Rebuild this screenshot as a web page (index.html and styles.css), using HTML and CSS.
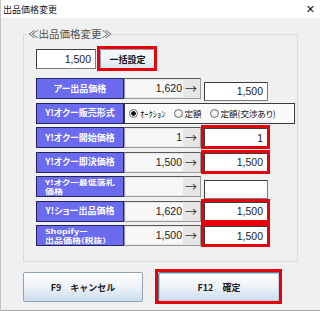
FILE: index.html
```html
<!DOCTYPE html>
<html lang="ja">
<head>
    <meta charset="UTF-8">
    <meta name="viewport" content="width=device-width, initial-scale=1.0">
    <title>出品価格変更</title>
    <link rel="stylesheet" href="styles.css">
</head>
<body>
    <div class="window">
        <div class="titlebar">
            <span class="title">出品価格変更</span>
            <span class="close">✕</span>
        </div>

        <div class="main">
            <fieldset class="group">
                <legend>≪出品価格変更≫</legend>

                <!-- bulk setting -->
                <div class="bulk">
                    <input type="text" class="num bulk-input" value="1,500">
                    <span class="mark"><button class="btn-small">一括設定</button></span>
                </div>

                <div class="rows">
                    <div class="row">
                        <div class="label"><span>アー出品価格</span></div>
                        <div class="cur"><span class="val">1,620</span><span class="arrow">→</span></div>
                        <span class="new"><input type="text" class="num" value="1,500"></span>
                    </div>

                    <div class="row">
                        <div class="label"><span>Y!オクー販売形式</span></div>
                        <div class="radios">
                            <span class="opt"><span class="dot on"></span>ｵｰｸｼｮﾝ</span>
                            <span class="opt"><span class="dot"></span>定額</span>
                            <span class="opt"><span class="dot"></span>定額(交渉あり)</span>
                        </div>
                    </div>

                    <div class="row">
                        <div class="label"><span>Y!オクー開始価格</span></div>
                        <div class="cur"><span class="val">1</span><span class="arrow">→</span></div>
                        <span class="new mark"><input type="text" class="num" value="1"></span>
                    </div>

                    <div class="row">
                        <div class="label"><span>Y!オクー即決価格</span></div>
                        <div class="cur"><span class="val">1,500</span><span class="arrow">→</span></div>
                        <span class="new mark"><input type="text" class="num" value="1,500"></span>
                    </div>

                    <div class="row">
                        <div class="label two"><span>Y!オクー最低落札<br>価格</span></div>
                        <div class="cur"><span class="val"></span><span class="arrow">→</span></div>
                        <span class="new"><input type="text" class="num" value=""></span>
                    </div>

                    <div class="row">
                        <div class="label"><span>Y!ショー出品価格</span></div>
                        <div class="cur"><span class="val">1,620</span><span class="arrow">→</span></div>
                        <span class="new mark"><input type="text" class="num" value="1,500"></span>
                    </div>

                    <div class="row">
                        <div class="label two"><span>Shopifyー<br>出品価格(税抜)</span></div>
                        <div class="cur"><span class="val">1,500</span><span class="arrow">→</span></div>
                        <span class="new mark"><input type="text" class="num" value="1,500"></span>
                    </div>
                </div>
            </fieldset>

            <!-- footer buttons -->
            <div class="actions">
                <button class="btn btn-cancel">F9　キャンセル</button>
                <span class="mark"><button class="btn btn-ok">F12　確定</button></span>
            </div>
        </div>
    </div>
</body>
</html>
```

FILE: styles.css
```css
* {
    box-sizing: border-box;
}
body {
    margin: 0;
    background-color: #f0f0f0;
    font-family: "Noto Sans CJK JP", sans-serif;
    color: #111;
}
.window {
    width: 320px;
    height: 311px;
    background-color: #f0f0f0;
    border-left: 1px solid #c4c4c4;
    border-bottom: 1px solid #a8a8a8;
}
.titlebar {
    height: 18px;
    background: #fff;
    display: flex;
    justify-content: space-between;
    align-items: center;
    padding: 0 5px 0 2px;
}
.title {
    font-size: 9px;
    line-height: 1;
}
.close {
    font-family: "DejaVu Sans", sans-serif;
    font-size: 11px;
    line-height: 1;
}
.main {
    padding: 10px 0 0 22px;
}
.group {
    width: 275px;
    margin: 0;
    padding: 8px 0 15px 12px;
    border: 1px solid #d4dde5;
}
legend {
    font-size: 10.5px;
    line-height: 12px;
    color: #505050;
    padding: 0 1px;
    margin-left: -9px;
}
.mark {
    position: relative;
    display: inline-flex;
}
.mark::after {
    content: "";
    position: absolute;
    inset: -3px -2px -2px -3px;
    border: 3px solid #e8000b;
    pointer-events: none;
}
.num {
    font-family: "Liberation Sans", Arial, sans-serif;
    font-size: 10.5px;
    text-align: right;
    color: #222;
    background: #fff;
    border: 1px solid #7a7a7a;
    border-top-color: #3c3c3c;
    border-left-color: #3c3c3c;
    padding: 0 4px 0 0;
    margin: 0;
    outline: none;
}
.bulk {
    display: flex;
    align-items: center;
    gap: 4px;
    height: 22px;
}
.bulk-input {
    width: 60px;
    height: 20px;
}
.btn-small {
    width: 55px;
    height: 20px;
    padding: 0;
    font-family: inherit;
    font-size: 9px;
    font-weight: bold;
    color: #111;
    border: 1px solid #8a9cae;
    border-radius: 2px;
    background: linear-gradient(#fbfcfd, #eef3f8 50%, #d9e5f1);
}
.rows {
    margin-top: 8px;
    display: flex;
    flex-direction: column;
    gap: 3.5px;
}
.row {
    display: flex;
    height: 21px;
}
.label {
    width: 88px;
    flex: none;
    display: flex;
    align-items: center;
    justify-content: center;
    background-color: #6b6bef;
    border: 1px solid #23235e;
    color: #fff;
    font-size: 9px;
    font-weight: bold;
    line-height: 10px;
    white-space: nowrap;
    font-feature-settings: "palt";
}
.label.two {
    justify-content: flex-start;
    padding-left: 8px;
}
.label.two span {
    display: block;
    line-height: 13px;
    transform: scaleY(0.74);
}
.cur {
    width: 77px;
    flex: none;
    display: flex;
    align-items: stretch;
    padding: 1px;
    border: 1px solid #9a9a9a;
    border-top-color: #5a5a5a;
    background: #e6e6e6;
}
.val {
    width: 57px;
    background: #f7f7f7;
    text-align: right;
    padding-right: 1px;
    font-family: "Liberation Sans", Arial, sans-serif;
    font-size: 10.5px;
    line-height: 17px;
    color: #222;
}
.arrow {
    flex: 1;
    text-align: center;
    font-size: 12px;
    line-height: 17px;
    color: #333;
}
.new {
    margin-left: 3px;
    align-self: center;
}
.new .num {
    width: 64px;
    height: 19px;
}
.radios {
    width: 171px;
    flex: none;
    display: flex;
    align-items: center;
    padding-left: 4px;
    border: 1px solid #3a3a3a;
    background: #fafafa;
    font-size: 8.5px;
    white-space: nowrap;
    font-feature-settings: "palt";
}
.opt {
    flex: none;
    display: flex;
    align-items: center;
    gap: 2px;
    margin-right: 8px;
}
.dot {
    width: 9px;
    height: 9px;
    border-radius: 50%;
    border: 1px solid #6b6b6b;
    background: radial-gradient(#fff, #e2e2e2);
}
.dot.on {
    background: radial-gradient(circle, #111 0 2px, #fff 2.6px);
}
.actions {
    display: flex;
    gap: 15px;
    margin-top: 10px;
}
.btn {
    height: 30px;
    padding: 0;
    font-family: inherit;
    font-size: 9px;
    font-weight: bold;
    color: #222;
    border: 1px solid #8fa4b5;
    border-radius: 2px;
    background: linear-gradient(#fdfeff, #f0f4f8 45%, #cbdcee);
}
.btn-cancel {
    width: 120px;
}
.btn-ok {
    width: 122px;
    border-color: #5f7d90;
    box-shadow: inset 0 0 0 1px #b5cde0;
}
```
